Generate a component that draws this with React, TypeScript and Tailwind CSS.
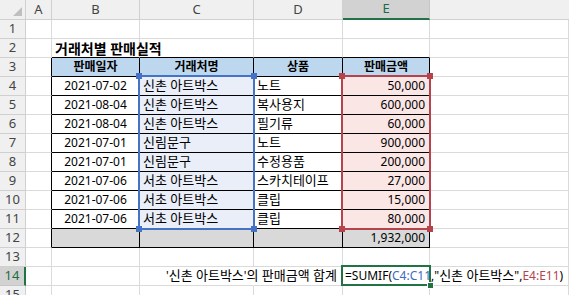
import { type ReactNode } from "react"

// sales rows shown in B4:E11
const rows = [
  ["2021-07-02", "신촌 아트박스", "노트", "50,000"],
  ["2021-08-04", "신촌 아트박스", "복사용지", "600,000"],
  ["2021-08-04", "신촌 아트박스", "필기류", "60,000"],
  ["2021-07-01", "신림문구", "노트", "900,000"],
  ["2021-07-01", "신림문구", "수정용품", "200,000"],
  ["2021-07-06", "서초 아트박스", "스카치테이프", "27,000"],
  ["2021-07-06", "서초 아트박스", "클립", "15,000"],
  ["2021-07-06", "서초 아트박스", "클립", "80,000"],
]

const grid = "border-[#dadada]"

// hangul renders a bit larger than the latin digits in the sheet font
function K({ children }: { children: ReactNode }) {
  return <span className="text-[13px]">{children}</span>
}

function Cell({ w, cls = grid, children }: { w: string; cls?: string; children?: ReactNode }) {
  return <div className={`${w} h-full shrink-0 flex items-center whitespace-nowrap border-r border-b ${cls}`}>{children}</div>
}

function RowHead({ n, active = false }: { n: number; active?: boolean }) {
  return (
    <div
      className={`w-[26px] h-full shrink-0 flex items-center justify-center text-[13px] border-b ${
        active
          ? "bg-[#d2d2d2] text-[#1e6b40] border-b-[#c6c6c6] border-r-2 border-r-[#217346]"
          : "bg-[#f0f0f0] text-[#444] border-r border-[#d0d0d0]"
      }`}
    >
      {n}
    </div>
  )
}

function Row({ children, h = "h-[19px]" }: { children: ReactNode; h?: string }) {
  return <div className={`flex ${h}`}>{children}</div>
}

export default function App() {
  return (
    <div className="relative w-[569px] h-[295px] overflow-hidden bg-white font-['Noto_Sans','Noto_Sans_CJK_KR',sans-serif] text-[12px] text-black">
      {/* column headers */}
      <Row h="h-[20px]">
        <div className="w-[26px] h-full shrink-0 relative bg-[#f0f0f0] border-r border-b border-[#d0d0d0]">
          <svg className="absolute right-[3px] bottom-[3px]" width="9" height="9" viewBox="0 0 9 9">
            <polygon points="9,0 9,9 0,9" fill="#bfbfbf" />
          </svg>
        </div>
        {[
          ["A", "w-[26px]"],
          ["B", "w-[88px]"],
          ["C", "w-[114px]"],
          ["D", "w-[89px]"],
        ].map(([l, w]) => (
          <div key={l} className={`${w} h-full shrink-0 flex items-center justify-center text-[13px] text-[#444] bg-[#f0f0f0] border-r border-b border-[#d0d0d0]`}>
            {l}
          </div>
        ))}
        <div className="w-[87px] h-full shrink-0 flex items-center justify-center text-[13px] text-[#1e6b40] bg-[#d2d2d2] border-r border-r-[#c6c6c6] border-b-2 border-b-[#217346]">
          E
        </div>
        <div className="flex-1 h-full bg-[#f0f0f0] border-b border-[#d0d0d0]" />
      </Row>

      {/* row 1 */}
      <Row>
        <RowHead n={1} />
        <Cell w="w-[26px]" />
        <Cell w="w-[88px]" />
        <Cell w="w-[114px]" />
        <Cell w="w-[89px]" />
        <Cell w="w-[87px]" />
        <Cell w="flex-1" />
      </Row>

      {/* row 2: title */}
      <Row>
        <RowHead n={2} />
        <Cell w="w-[26px]" />
        <Cell w="w-[88px]" cls="border-r-[#dadada] border-b-black">
          <span className="pl-[3px] text-[14px] font-bold">거래처별 판매실적</span>
        </Cell>
        <Cell w="w-[114px]" cls="border-r-[#dadada] border-b-black" />
        <Cell w="w-[89px]" cls="border-r-[#dadada] border-b-black" />
        <Cell w="w-[87px]" cls="border-r-[#dadada] border-b-black" />
        <Cell w="flex-1" />
      </Row>

      {/* row 3: table header */}
      <Row>
        <RowHead n={3} />
        <Cell w="w-[26px]" cls="border-r-black border-b-[#dadada]" />
        {[
          ["판매일자", "w-[88px]"],
          ["거래처명", "w-[114px]"],
          ["상품", "w-[89px]"],
          ["판매금액", "w-[87px]"],
        ].map(([t, w]) => (
          <Cell key={t} w={`${w} justify-center font-bold bg-[#bdd7ee]`} cls="border-black">
            {t}
          </Cell>
        ))}
        <Cell w="flex-1" />
      </Row>

      {rows.map((r, i) => (
        <Row key={i}>
          <RowHead n={i + 4} />
          <Cell w="w-[26px]" cls="border-r-black border-b-[#dadada]" />
          <Cell w="w-[88px] justify-center" cls="border-black">{r[0]}</Cell>
          <Cell w="w-[114px] pl-[3px] bg-[#e9eef8]" cls="border-black"><K>{r[1]}</K></Cell>
          <Cell w="w-[89px] pl-[3px]" cls="border-black"><K>{r[2]}</K></Cell>
          <Cell w="w-[87px] justify-end pr-[4px] bg-[#fbe6e6]" cls="border-black">{r[3]}</Cell>
          <Cell w="flex-1" />
        </Row>
      ))}

      {/* row 12: total */}
      <Row>
        <RowHead n={12} />
        <Cell w="w-[26px]" cls="border-r-black border-b-[#dadada]" />
        <Cell w="w-[88px] bg-[#d9d9d9]" cls="border-black" />
        <Cell w="w-[114px] bg-[#d9d9d9]" cls="border-black" />
        <Cell w="w-[89px] bg-[#d9d9d9]" cls="border-black" />
        <Cell w="w-[87px] justify-end pr-[4px] bg-[#d9d9d9]" cls="border-black">1,932,000</Cell>
        <Cell w="flex-1" />
      </Row>

      {/* row 13 */}
      <Row>
        <RowHead n={13} />
        <Cell w="w-[26px]" />
        <Cell w="w-[88px]" />
        <Cell w="w-[114px]" />
        <Cell w="w-[89px]" />
        <Cell w="w-[87px]" />
        <Cell w="flex-1" />
      </Row>

      {/* row 14: label + formula */}
      <Row>
        <RowHead n={14} active />
        <Cell w="w-[26px]" />
        <Cell w="w-[88px]" />
        <Cell w="w-[114px]" cls="border-r-white border-b-[#dadada]" />
        <Cell w="w-[89px] justify-end pr-[5px]">
          <span>'<K>신촌 아트박스</K>'<K>의 판매금액 합계</K></span>
        </Cell>
        <Cell w="w-[87px] pl-[2px]" cls="border-r-white border-b-[#dadada]">
          <span>
            =SUMIF(<span className="text-[#3c6cc0]">C4:C11</span>,"<K>신촌 아트박스</K>",<span className="text-[#b6434c]">E4:E11</span>)
          </span>
        </Cell>
        <Cell w="flex-1" />
      </Row>

      {/* row 15 */}
      <Row>
        <RowHead n={15} />
        <Cell w="w-[26px]" />
        <Cell w="w-[88px]" />
        <Cell w="w-[114px]" />
        <Cell w="w-[89px]" />
        <Cell w="w-[87px]" />
        <Cell w="flex-1" />
      </Row>

      {/* range highlight C4:C11 */}
      <div className="absolute left-[138px] top-[75px] w-[117px] h-[155px] border-2 border-[#4472c4] pointer-events-none" />
      <div className="absolute left-[136px] top-[73px] w-[6px] h-[6px] bg-[#4472c4]" />
      <div className="absolute left-[251px] top-[73px] w-[6px] h-[6px] bg-[#4472c4]" />
      <div className="absolute left-[136px] top-[226px] w-[6px] h-[6px] bg-[#4472c4]" />
      <div className="absolute left-[251px] top-[226px] w-[6px] h-[6px] bg-[#4472c4]" />

      {/* range highlight E4:E11 */}
      <div className="absolute left-[341px] top-[75px] w-[90px] h-[155px] border-2 border-[#b6434c] pointer-events-none" />
      <div className="absolute left-[339px] top-[73px] w-[6px] h-[6px] bg-[#b6434c]" />
      <div className="absolute left-[427px] top-[73px] w-[6px] h-[6px] bg-[#b6434c]" />
      <div className="absolute left-[339px] top-[226px] w-[6px] h-[6px] bg-[#b6434c]" />
      <div className="absolute left-[427px] top-[226px] w-[6px] h-[6px] bg-[#b6434c]" />

      {/* active cell E14 */}
      <div className="absolute left-[341px] top-[265px] w-[90px] h-[21px] border-2 border-[#217346] pointer-events-none" />
      <div className="absolute left-[427px] top-[282px] w-[7px] h-[7px] bg-[#217346] border border-white" />
    </div>
  )
}
